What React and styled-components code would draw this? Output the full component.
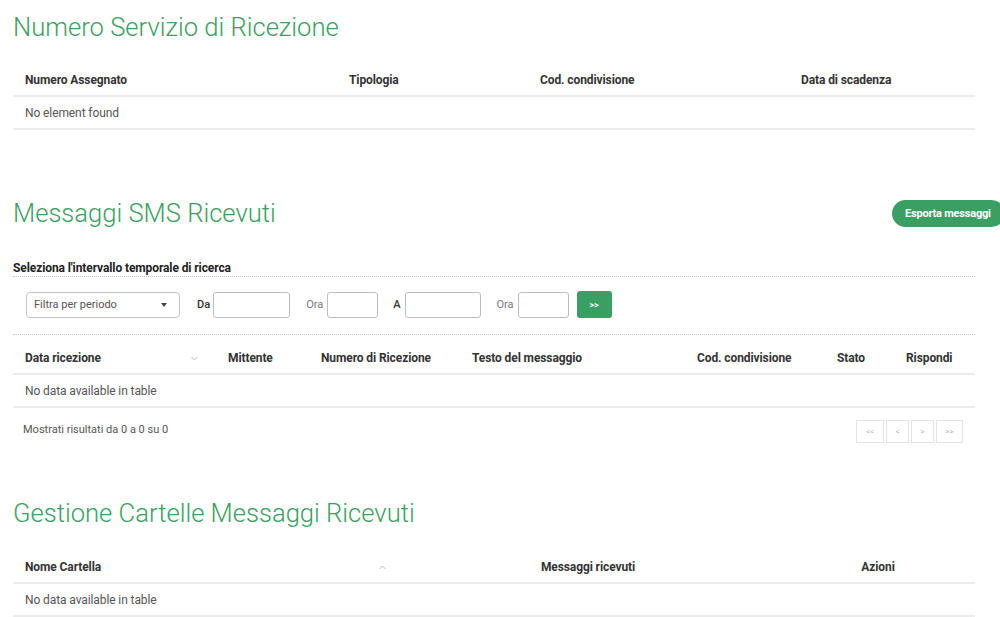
import styled, { createGlobalStyle } from 'styled-components'

const GREEN = '#3a9f62'

const Global = createGlobalStyle`
  body {
    margin: 0;
    background: #fff;
    font-family: Roboto, "Liberation Sans", Arial, sans-serif;
    overflow: hidden;
  }
`

const Page = styled.div`
  padding: 0 25px 0 13px;
  width: 962px;
`

const Section = styled.section`
  margin-top: ${(p) => p.top}px;
`

const TitleRow = styled.div`
  display: flex;
  align-items: center;
  justify-content: space-between;
  margin-right: -30px;
`

const Title = styled.h2`
  margin: 0;
  font-size: 25.6px;
  line-height: 30px;
  font-weight: 300;
  color: ${GREEN};
`

const ExportButton = styled.button`
  height: 27px;
  width: 113px;
  border: 0;
  border-radius: 14px;
  background: ${GREEN};
  color: #fff;
  font-family: inherit;
  font-size: 11px;
  font-weight: 700;
  text-align: left;
  padding: 0 0 0 13px;
  letter-spacing: -0.2px;
`

const Table = styled.div`
  margin-top: ${(p) => p.top}px;
`

const Row = styled.div`
  display: grid;
  grid-template-columns: ${(p) => p.cols};
  height: ${(p) => (p.head ? 30 : 31)}px;
  align-items: center;
  border-bottom: 2px solid #ebebeb;
`

const Cell = styled.div`
  padding: 0 ${(p) => p.pr || 12}px 0 12px;
  font-size: 12px;
  color: ${(p) => (p.head ? '#333' : '#555')};
  font-weight: ${(p) => (p.head ? 700 : 400)};
  white-space: nowrap;
  display: flex;
  align-items: center;
  justify-content: ${(p) => (p.center ? 'center' : 'space-between')};
  letter-spacing: -0.1px;
`

const Empty = styled(Cell)`
  grid-column: 1 / -1;
`

const SortIcon = styled.svg`
  width: 7px;
  height: 5px;
`

const SubHeading = styled.div`
  margin-top: 32px;
  font-size: 12px;
  line-height: 16px;
  font-weight: 700;
  color: #222;
  border-bottom: 1px dotted #c8c8c8;
  letter-spacing: -0.1px;
`

const FilterBar = styled.div`
  display: flex;
  align-items: center;
  padding: 14px 0 16px 13px;
  border-bottom: 1px dotted #c8c8c8;
`

const Select = styled.div`
  width: 154px;
  height: 26px;
  box-sizing: border-box;
  border: 1px solid #c4c4c4;
  border-radius: 4px;
  display: flex;
  align-items: center;
  justify-content: space-between;
  padding: 0 12px 0 7px;
  font-size: 11px;
  color: #555;
  margin-right: 17px;
`

const Caret = styled.span`
  width: 0;
  height: 0;
  border-left: 3.5px solid transparent;
  border-right: 3.5px solid transparent;
  border-top: 4px solid #444;
`

const Label = styled.span`
  font-size: 11px;
  color: ${(p) => (p.strong ? '#333' : '#777')};
  font-weight: ${(p) => (p.strong ? 500 : 400)};
  margin-right: ${(p) => p.mr || 3}px;
`

const Input = styled.input`
  width: ${(p) => p.w}px;
  height: 26px;
  box-sizing: border-box;
  border: 1px solid #bdbdbd;
  border-radius: 3px;
  margin: 0 ${(p) => p.mr}px 0 0;
  padding: 0;
`

const GoButton = styled.button`
  width: 35px;
  height: 27px;
  border: 0;
  border-radius: 3px;
  background: ${GREEN};
  color: #fff;
  font-family: inherit;
  font-size: 9px;
  font-weight: 700;
  padding: 0;
`

const Footer = styled.div`
  margin-top: 12px;
  display: flex;
  align-items: flex-start;
  justify-content: space-between;
  padding: 0 12px 0 10px;
  height: 23px;
`

const Info = styled.span`
  margin-top: 2px;
  font-size: 11px;
  line-height: 16px;
  color: #555;
`

const Pager = styled.div`
  display: flex;
  gap: 2px;
`

const PageBtn = styled.span`
  width: ${(p) => p.w}px;
  height: 23px;
  box-sizing: border-box;
  border: 1px solid #e4e4e4;
  display: flex;
  align-items: center;
  justify-content: center;
  font-size: 8px;
  color: #b5b5b5;
`

const Down = () => (
  <SortIcon viewBox="0 0 7 5">
    <path d="M0.5 1 L3.5 4 L6.5 1" fill="none" stroke="#bbb" strokeWidth="1" />
  </SortIcon>
)

const Up = () => (
  <SortIcon viewBox="0 0 7 5">
    <path d="M0.5 4 L3.5 1 L6.5 4" fill="none" stroke="#bbb" strokeWidth="1" />
  </SortIcon>
)

const cols1 = '324px 191px 261px 186px'
const cols2 = '203px 93px 151px 225px 140px 69px 81px'
const cols3 = '382px 386px 194px'

export default function App() {
  return (
    <Page>
      <Global />
      <Section top={12}>
        <Title>Numero Servizio di Ricezione</Title>
        <Table top={23}>
          <Row head cols={cols1}>
            <Cell head>Numero Assegnato</Cell>
            <Cell head>Tipologia</Cell>
            <Cell head>Cod. condivisione</Cell>
            <Cell head>Data di scadenza</Cell>
          </Row>
          <Row cols={cols1}>
            <Empty>No element found</Empty>
          </Row>
        </Table>
      </Section>

      <Section top={68}>
        <TitleRow>
          <Title>Messaggi SMS Ricevuti</Title>
          <ExportButton>Esporta messaggi</ExportButton>
        </TitleRow>
        <SubHeading>Seleziona l'intervallo temporale di ricerca</SubHeading>
        <FilterBar>
          <Select>
            Filtra per periodo
            <Caret />
          </Select>
          <Label strong>Da</Label>
          <Input w={77} mr={16} />
          <Label mr={4}>Ora</Label>
          <Input w={51} mr={15} />
          <Label strong mr={4}>A</Label>
          <Input w={76} mr={16} />
          <Label mr={4}>Ora</Label>
          <Input w={51} mr={8} />
          <GoButton>&gt;&gt;</GoButton>
        </FilterBar>
        <Table top={8}>
          <Row head cols={cols2}>
            <Cell head pr={18}>
              Data ricezione
              <Down />
            </Cell>
            <Cell head>Mittente</Cell>
            <Cell head>Numero di Ricezione</Cell>
            <Cell head>Testo del messaggio</Cell>
            <Cell head>Cod. condivisione</Cell>
            <Cell head>Stato</Cell>
            <Cell head>Rispondi</Cell>
          </Row>
          <Row cols={cols2}>
            <Empty>No data available in table</Empty>
          </Row>
        </Table>
        <Footer>
          <Info>Mostrati risultati da 0 a 0 su 0</Info>
          <Pager>
            <PageBtn w={28}>&lt;&lt;</PageBtn>
            <PageBtn w={23}>&lt;</PageBtn>
            <PageBtn w={23}>&gt;</PageBtn>
            <PageBtn w={27}>&gt;&gt;</PageBtn>
          </Pager>
        </Footer>
      </Section>

      <Section top={55}>
        <Title>Gestione Cartelle Messaggi Ricevuti</Title>
        <Table top={24}>
          <Row head cols={cols3}>
            <Cell head pr={9}>
              Nome Cartella
              <Up />
            </Cell>
            <Cell head center>Messaggi ricevuti</Cell>
            <Cell head center>Azioni</Cell>
          </Row>
          <Row cols={cols3}>
            <Empty>No data available in table</Empty>
          </Row>
        </Table>
      </Section>
    </Page>
  )
}
